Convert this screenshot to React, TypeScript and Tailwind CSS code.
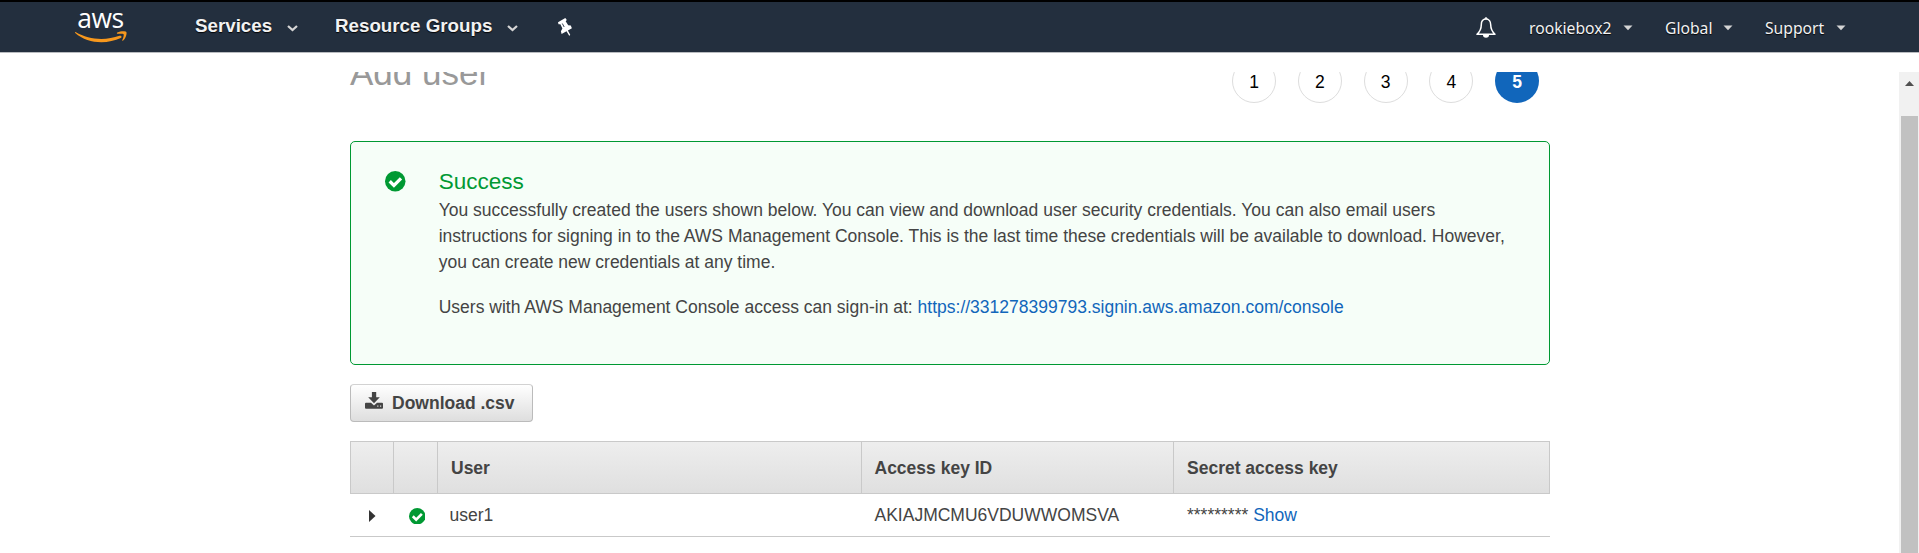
import React from "react";

function Chevron() {
  return (
    <svg width="11" height="7" viewBox="0 0 11 7" fill="none" stroke="#d5d5d5" strokeWidth="2.3">
      <path d="M1 1 L5.5 5 L10 1" />
    </svg>
  );
}

function Caret() {
  return (
    <svg width="10" height="6" viewBox="0 0 10 6" fill="#d5d5d5">
      <path d="M0.5 0.5 H9.5 L5 5.2 Z" />
    </svg>
  );
}

function Smile() {
  return (
    <svg width="52" height="12" viewBox="0 0 52 12" className="block">
      <path d="M0.6 1 C14 9.2 31 9.6 44.5 4.8 C46.2 4.3 47.4 6 45.8 7 C32 13.4 12.5 13 0.2 2 C-0.2 1.4 0.1 0.8 0.6 1 Z" fill="#f7981d" />
      <path d="M42.3 1.5 C45.5 0 50.5 0 51.3 0.9 C52.2 2.3 50.8 7.3 48.2 9.5 C47.6 10 47 9.7 47.3 9.1 C48.2 7 49.1 4 48.6 3.2 C48 2.5 45 2.6 42.6 2.8 C41.8 2.8 41.6 1.9 42.3 1.5 Z" fill="#f7981d" />
    </svg>
  );
}

function Pin() {
  return (
    <svg width="16" height="20" viewBox="0 0 16 20">
      <path
        d="M1 5.2 L8.3 1 L9.8 3 L8.7 4.2 L11.2 8.3 L13.8 8.5 L14.9 11.3 L10.9 13.5 L13.2 17.8 L12.8 18.8 L11.9 18.2 L9.5 14.3 L4.6 16.9 L3.9 14.3 L5.4 11.6 L3.4 7.3 L1.5 7.3 Z"
        fill="#fff"
      />
      <path d="M5.3 6.5 L7.2 10" stroke="#232f3e" strokeWidth="0.9" fill="none" />
    </svg>
  );
}

function Bell() {
  return (
    <svg width="20" height="21" viewBox="0 0 20 21" fill="none">
      <path
        d="M10 2 C7 2 5.3 4.4 5.3 7.8 C5.3 12.2 4.3 14.3 1 17.3 H19 C15.7 14.3 14.7 12.2 14.7 7.8 C14.7 4.4 13 2 10 2 Z"
        stroke="#fff"
        strokeWidth="1.5"
        strokeLinejoin="round"
      />
      <path d="M8.8 1.8 a1.2 1.2 0 0 1 2.4 0 Z" fill="#fff" stroke="#fff" strokeWidth="0.6" />
      <path d="M7 18 H13 A3 2.8 0 0 1 7 18 Z" fill="#fff" />
    </svg>
  );
}

function CheckCircle({ size }: { size: number }) {
  return (
    <svg width={size} height={size} viewBox="0 0 20 20" className="block">
      <circle cx="10" cy="10" r="10" fill="#009933" />
      <path d="M4.6 10 L8.7 14.1 L15.6 7.2" fill="none" stroke="#fff" strokeWidth="3.2" />
    </svg>
  );
}

function DownloadIcon() {
  return (
    <svg width="18" height="17" viewBox="0 0 18 17" fill="#444">
      <path d="M6.9 0 H11.2 V5.3 H14.8 L9 11.2 L3.2 5.3 H6.9 Z" />
      <path d="M1 10.8 H6 L9 13.4 L12 10.8 H17 Q18 10.8 18 11.8 V15.7 Q18 16.7 17 16.7 H1 Q0 16.7 0 15.7 V11.8 Q0 10.8 1 10.8 Z" />
      <rect x="12.2" y="13.5" width="1.2" height="1.2" fill="#e4e4e4" />
      <rect x="15" y="13.5" width="1.2" height="1.2" fill="#e4e4e4" />
    </svg>
  );
}

const shadow = "[text-shadow:0_1px_1px_rgba(0,0,0,0.9)]";

function AccountItem({ label, className }: { label: string; className: string }) {
  return (
    <div className={`flex items-center justify-between pt-px ${className}`}>
      <span className={`pt-px font-['Noto_Sans',sans-serif] text-[15.7px] text-[#f2f2f2] ${shadow}`}>{label}</span>
      <Caret />
    </div>
  );
}

function Header() {
  return (
    <header className="flex h-[53px] items-stretch border-t-2 border-b border-t-black border-b-[#b9bcc0] bg-[#232f3e] whitespace-nowrap">
      <div className="ml-[75px] w-[52px]">
        <div className="h-[28.5px] pr-px text-center font-['Open_Sans','Noto_Sans',sans-serif] text-[26.5px] leading-[32px] font-medium tracking-[-0.5px] text-white">
          aws
        </div>
        <Smile />
      </div>
      <div className="ml-[68px] flex w-[103px] items-center justify-between">
        <span className={`pb-0.5 text-[18.75px] leading-[48px] font-bold text-[#f2f2f2] ${shadow}`}>Services</span>
        <span className="pt-[3px]"><Chevron /></span>
      </div>
      <div className="ml-[37px] flex w-[183px] items-center justify-between">
        <span className={`pb-0.5 text-[18.75px] leading-[48px] font-bold text-[#f2f2f2] ${shadow}`}>Resource Groups</span>
        <span className="pt-[3px]"><Chevron /></span>
      </div>
      <div className="ml-[39px] flex items-center">
        <Pin />
      </div>
      <div className="ml-auto flex items-center">
        <Bell />
      </div>
      <AccountItem label="rookiebox2" className="ml-[33px] w-[104px]" />
      <AccountItem label="Global" className="ml-8 w-[68px]" />
      <AccountItem label="Support" className="mr-[73px] ml-8 w-[81px]" />
    </header>
  );
}

function Steps() {
  return (
    <ol className="flex gap-[21.75px] pr-[11px] text-[17.5px] leading-[44px] text-black">
      {[1, 2, 3, 4].map((n) => (
        <li key={n} className="flex size-11 items-center justify-center rounded-full border border-[#ddd] pt-0.5">
          {n}
        </li>
      ))}
      <li className="flex size-11 items-center justify-center rounded-full bg-[#1166bb] pt-0.5 font-bold text-white">5</li>
    </ol>
  );
}

function Scrollbar() {
  return (
    <div className="flex w-5 shrink-0 flex-col bg-[#f1f1f1]">
      <div className="flex h-11 items-start justify-center pt-[9px]">
        <svg width="9" height="5" viewBox="0 0 9 5" fill="#505050">
          <path d="M4.5 0 L9 5 H0 Z" />
        </svg>
      </div>
      <div className="mr-px ml-0.5 flex-1 bg-[#c1c1c1]" />
    </div>
  );
}

export default function App() {
  return (
    <div className="flex h-[553px] w-[1919px] flex-col overflow-hidden bg-white font-['Liberation_Sans',Arial,sans-serif] text-[17.5px] leading-[26px] text-[#444]">
      <Header />
      <div className="mt-[19px] flex h-[481px] overflow-hidden">
        <main className="flex-1 overflow-hidden">
          <div className="-mt-[13px] ml-[350px] w-[1200px]">
            <div className="flex h-11 items-start justify-between">
              <h1 className="text-[35px] leading-[28px] text-[#999]">Add user</h1>
              <Steps />
            </div>

            <section className="mt-[38px] flex h-[224px] rounded-[5px] border border-[#009933] bg-[#f6fef8] pt-6 pl-[34px]">
              <div className="w-[53.7px] pt-[5px]">
                <CheckCircle size={20.5} />
              </div>
              <div className="w-[1080px]">
                <h2 className="text-[22.5px] leading-[31px] text-[#009933]">Success</h2>
                <p>
                  You successfully created the users shown below. You can view and download user security credentials. You can also email users
                  <br />
                  instructions for signing in to the AWS Management Console. This is the last time these credentials will be available to download. However,
                  <br />
                  you can create new credentials at any time.
                </p>
                <p className="mt-[19px]">
                  Users with AWS Management Console access can sign-in at:{" "}
                  <a className="text-[#1166bb]">https://331278399793.signin.aws.amazon.com/console</a>
                </p>
              </div>
            </section>

            <button className="mt-[19px] flex h-[38px] w-[183px] items-center rounded-[4px] border border-[#bbb] border-t-[#d2d2d2] bg-linear-to-b from-white to-[#dedede] pl-3.5 font-bold">
              <span className="-mt-1.5"><DownloadIcon /></span>
              <span className="ml-[9px]">Download .csv</span>
            </button>

            <table className="mt-[19px] w-[1200px] table-fixed border-separate border-spacing-0 text-left">
              <colgroup>
                <col className="w-[44px]" />
                <col className="w-[44px]" />
                <col className="w-[424px]" />
                <col className="w-[312px]" />
                <col className="w-[376px]" />
              </colgroup>
              <thead>
                <tr className="h-[53px] bg-linear-to-b from-[#eeeeee] to-[#dfdfdf] [&>th]:border-y [&>th]:border-r [&>th]:border-[#c9c9c9] [&>th]:p-0">
                  <th className="border-l" />
                  <th />
                  <th className="pl-[13px]!">User</th>
                  <th className="pl-[12.5px]!">Access key ID</th>
                  <th className="pl-[13px]!">Secret access key</th>
                </tr>
              </thead>
              <tbody>
                <tr className="h-[43px] [&>td]:border-b [&>td]:border-[#c9c9c9] [&>td]:p-0">
                  <td>
                    <svg width="7" height="12" viewBox="0 0 7 12" fill="#333" className="mt-[2px] ml-[19px] block">
                      <path d="M0 0 L6.5 6 L0 12 Z" />
                    </svg>
                  </td>
                  <td>
                    <div className="pt-0.5 pl-[14.5px]">
                      <CheckCircle size={16.5} />
                    </div>
                  </td>
                  <td className="pl-[11.5px]!">user1</td>
                  <td className="pl-[12.5px]!">AKIAJMCMU6VDUWWOMSVA</td>
                  <td className="pl-[13px]!">
                    ********* <a className="text-[#1166bb]">Show</a>
                  </td>
                </tr>
              </tbody>
            </table>
          </div>
        </main>
        <Scrollbar />
      </div>
    </div>
  );
}
